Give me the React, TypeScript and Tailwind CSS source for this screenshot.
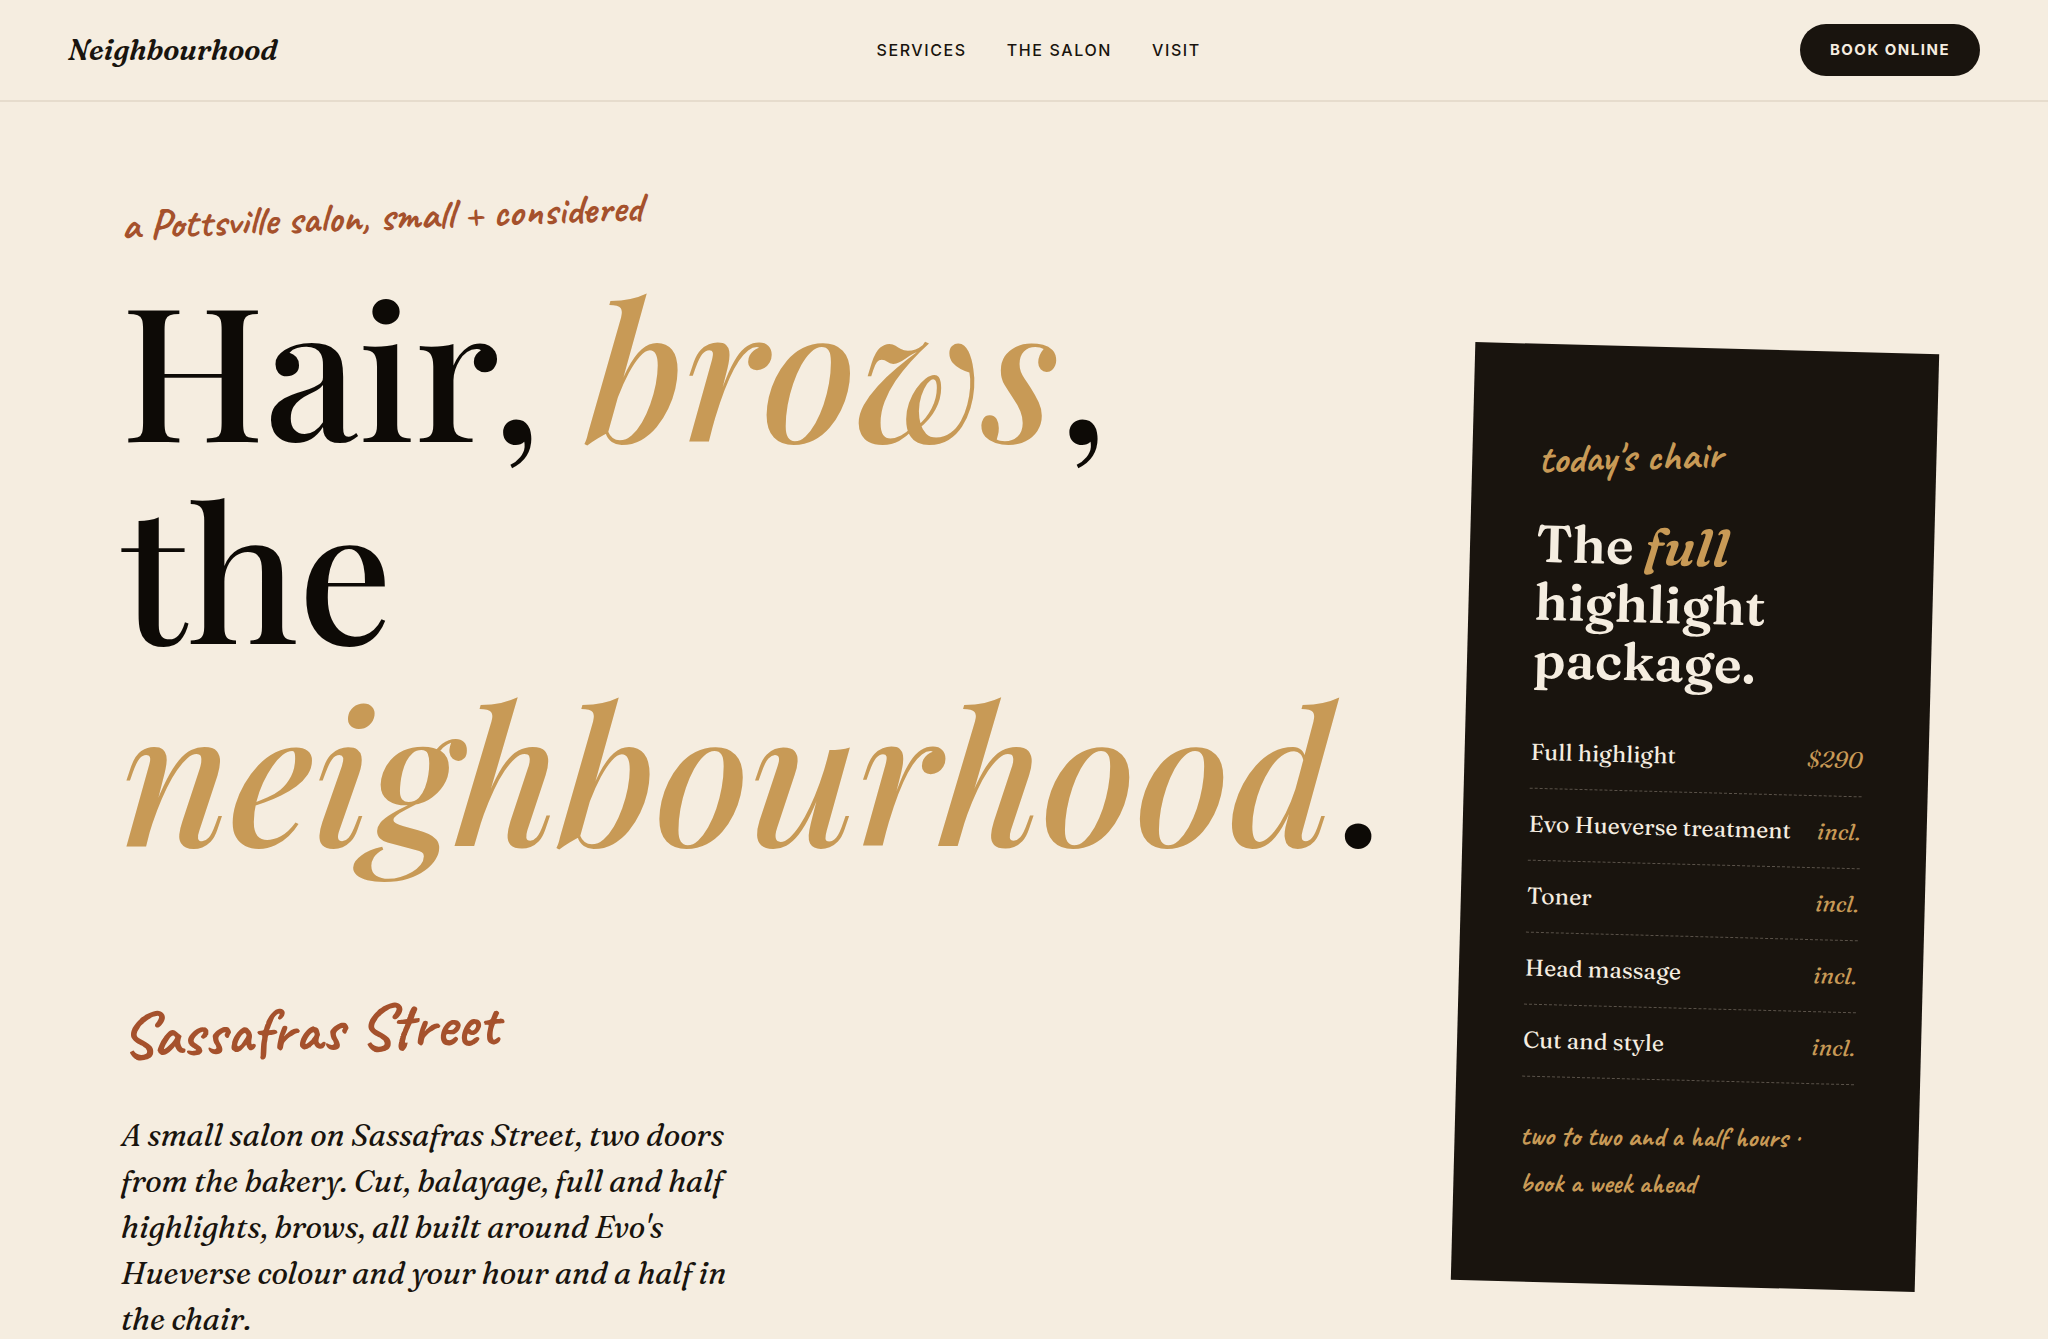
import React from "react";

interface PackageItem {
  name: string;
  price: string;
}

const navLinks = [
  { label: "Services", href: "#services" },
  { label: "The salon", href: "#salon" },
  { label: "Visit", href: "#visit" },
];

const packageItems: PackageItem[] = [
  { name: "Full highlight", price: "$290" },
  { name: "Evo Hueverse treatment", price: "incl." },
  { name: "Toner", price: "incl." },
  { name: "Head massage", price: "incl." },
  { name: "Cut and style", price: "incl." },
];

const Header: React.FC = () => (
  <header className="flex items-center justify-between border-b-2 border-[#e6dccd] px-[68px] py-6">
    <a
      href="#top"
      className="font-['Fraunces','Liberation_Serif',serif] text-[29px] leading-10 font-semibold italic"
    >
      Neighbourhood
    </a>
    <nav className="flex gap-10 font-['Inter',sans-serif] text-base font-medium tracking-widest uppercase">
      {navLinks.map((link) => (
        <a key={link.href} href={link.href}>
          {link.label}
        </a>
      ))}
    </nav>
    <button
      type="button"
      className="h-[52px] rounded-full bg-[#19140e] px-[30px] font-['Inter',sans-serif] text-[15px] font-bold tracking-widest text-[#f5ede0] uppercase"
    >
      Book online
    </button>
  </header>
);

const PackageCard: React.FC = () => (
  <aside className="mt-[246px] w-[464px] shrink-0 rotate-[1.5deg] bg-[#19140e] px-[66px] pt-[92px] pb-[76px] text-[#f5ede0]">
    <p className="origin-left -rotate-3 font-['Caveat','Lato',cursive] text-[42px] leading-[48px] font-semibold text-[#c89a56]">
      today's chair
    </p>
    <h2 className="mt-[30px] font-['Fraunces','Liberation_Serif',serif] text-[52px] leading-[58px] font-semibold">
      The <em className="text-[#c89a56]">full</em>
      <br />
      highlight package.
    </h2>
    <ul className="mt-[29px] font-['Fraunces','Liberation_Serif',serif] text-[23px] font-medium">
      {packageItems.map((item) => (
        <li
          key={item.name}
          className="flex h-[72px] items-center justify-between gap-4 border-b border-dashed border-[#5a5249]"
        >
          <span>{item.name}</span>
          <span className="text-[#c89a56] italic">{item.price}</span>
        </li>
      ))}
    </ul>
    <p className="mt-[35px] origin-left -rotate-1 font-['Caveat','Lato',cursive] text-[28px] leading-[47px] font-semibold text-[#c89a56]">
      two to two and a half hours ·
      <br />
      book a week ahead
    </p>
  </aside>
);

const Hero: React.FC = () => (
  <main className="flex items-start justify-between gap-6 px-[121px]">
    <div className="min-w-0 flex-1 pt-[100px]">
      <p className="w-fit origin-left -rotate-2 font-['Caveat','Lato',cursive] text-[42px] leading-[48px] font-semibold text-[#a5512c]">
        a Pottsville salon, small + considered
      </p>
      <h1 className="mt-[14px] font-['Playfair_Display','Fraunces',serif] text-[187px] leading-[202px] font-medium text-[#0d0a06]">
        Hair, <em className="text-[#c89a56]">brows</em>,
        <br />
        the
        <br />
        <em className="text-[#c89a56]">neighbourhood</em>.
      </h1>
      <p className="mt-[130px] w-fit origin-left -rotate-2 font-['Caveat','Lato',cursive] text-[64px] leading-[72px] font-bold text-[#a5512c]">
        Sassafras Street
      </p>
      <p className="mt-[40px] max-w-[620px] font-['Fraunces','Liberation_Serif',serif] text-[31px] leading-[46px] italic">
        A small salon on Sassafras Street, two doors from the bakery. Cut,
        balayage, full and half highlights, brows, all built around Evo's
        Hueverse colour and your hour and a half in the chair.
      </p>
    </div>
    <PackageCard />
  </main>
);

const App: React.FC = () => (
  <div id="top" className="min-h-screen bg-[#f5ede0] text-[#19140e]">
    <Header />
    <Hero />
  </div>
);

export default App;
